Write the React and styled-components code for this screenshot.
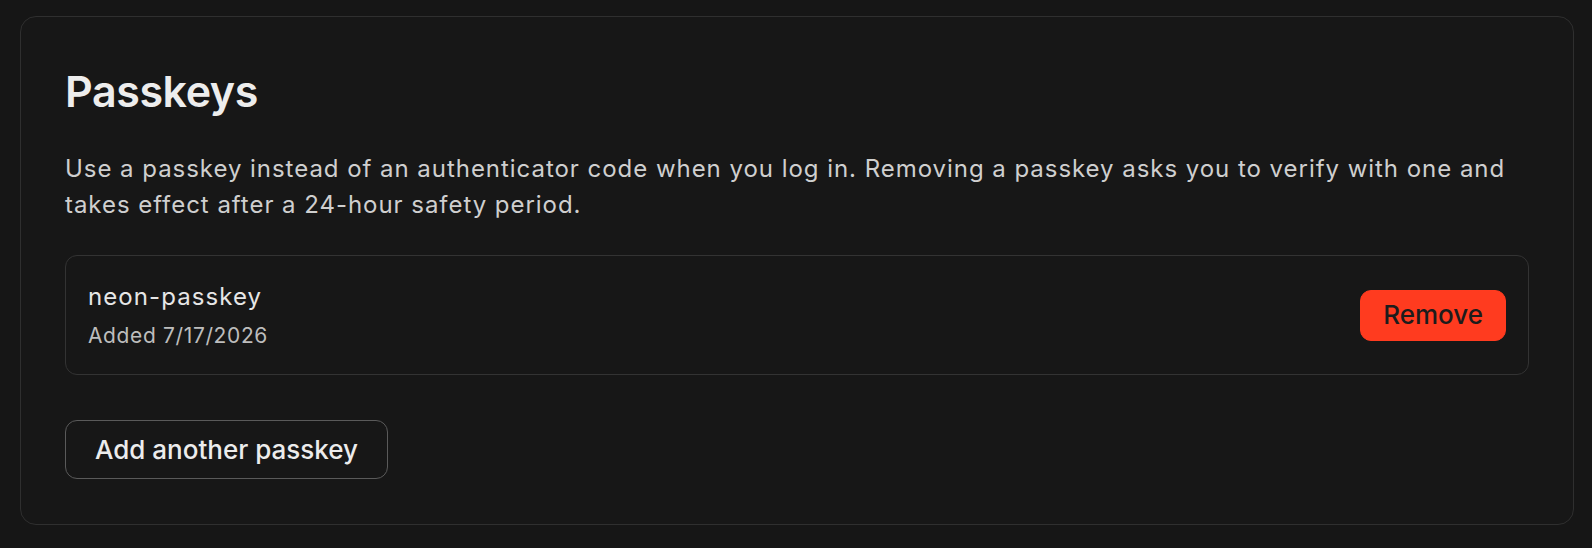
import styled, { createGlobalStyle } from "styled-components";

const GlobalStyle = createGlobalStyle`
  html, body {
    margin: 0;
    padding: 0;
    background: #161616;
  }
  body {
    font-family: Inter, "Noto Sans", "Liberation Sans", sans-serif;
    -webkit-font-smoothing: antialiased;
  }
`;

//page wrapper
const Page = styled.div`
  padding: 16px 18px 25px 20px;
`;

//outer settings card
const Card = styled.section`
  background: #171717;
  border: 1px solid #2f2f2f;
  border-radius: 16px;
  padding: 47px 44px 45px;
`;

const Title = styled.h2`
  margin: 0;
  font-size: 43px;
  line-height: 54px;
  font-weight: 600;
  color: #ededed;
  letter-spacing: -0.01em;
`;

const Description = styled.p`
  margin: 33px 0 32px;
  font-size: 24px;
  line-height: 36px;
  color: #cfcfcf;
  letter-spacing: 0.04em;
`;

//single passkey row
const KeyRow = styled.div`
  display: flex;
  align-items: center;
  justify-content: space-between;
  border: 1px solid #333333;
  border-radius: 12px;
  padding: 23px 22px;
`;

const KeyInfo = styled.div`
  display: flex;
  flex-direction: column;
  gap: 5px;
`;

const KeyName = styled.span`
  font-size: 24px;
  line-height: 36px;
  color: #e6e6e6;
  letter-spacing: 0.045em;
`;

const KeyDate = styled.span`
  font-size: 21px;
  line-height: 31px;
  color: #bdbdbd;
  letter-spacing: 0.03em;
`;

const Button = styled.button`
  font-family: inherit;
  font-size: 26px;
  font-weight: 500;
  line-height: 1;
  cursor: pointer;
  display: inline-flex;
  align-items: center;
  justify-content: center;
  height: ${(p) => (p.$danger ? "51px" : "59px")};
  padding: 0 ${(p) => (p.$danger ? "22px" : "29px")};
  border-radius: ${(p) => (p.$danger ? "11px" : "12px")};
  border: 1px solid ${(p) => (p.$danger ? "#ff3b1f" : "#5a5a5a")};
  background: ${(p) => (p.$danger ? "#ff3b1f" : "transparent")};
  color: ${(p) => (p.$danger ? "#1c1c1c" : "#ececec")};
`;

const Actions = styled.div`
  margin-top: 45px;
  display: flex;
`;

const passkeys = [{ id: 1, name: "neon-passkey", added: "7/17/2026" }];

function App() {
  return (
    <Page>
      <GlobalStyle />
      <Card>
        <Title>Passkeys</Title>
        <Description>
          Use a passkey instead of an authenticator code when you log in.
          Removing a passkey asks you to verify with one and takes effect after
          a 24-hour safety period.
        </Description>
        {passkeys.map((key) => (
          <KeyRow key={key.id}>
            <KeyInfo>
              <KeyName>{key.name}</KeyName>
              <KeyDate>Added {key.added}</KeyDate>
            </KeyInfo>
            <Button $danger>Remove</Button>
          </KeyRow>
        ))}
        <Actions>
          <Button>Add another passkey</Button>
        </Actions>
      </Card>
    </Page>
  );
}

export default App;
